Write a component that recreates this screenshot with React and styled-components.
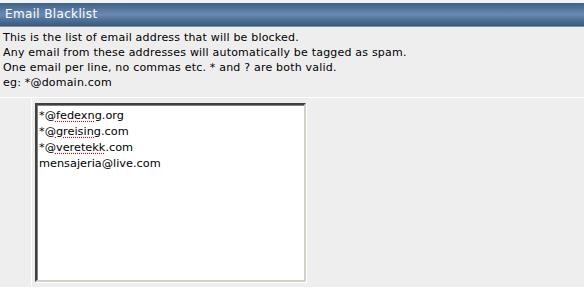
import React from 'react'
import styled, { createGlobalStyle } from 'styled-components'

const GlobalStyle = createGlobalStyle`
	body {
		margin: 0;
		background: #ffffff;
		font-family: "DejaVu Sans", Verdana, sans-serif;
		font-size: 11px;
		color: #000000;
	}
`

const Panel = styled.div`
	width: 584px;
	padding-top: 3px;
	background: #f2f4f6;
`
const Header = styled.div`
	height: 23px;
	line-height: 23px;
	padding-left: 5px;
	color: #ffffff;
	font-size: 12px;
	letter-spacing: 0.35px;
	background: linear-gradient(to bottom, #3e6189 0%, #5d7ea4 35%, #6a8ab0 50%, #4c6f96 75%, #365a80 100%);
	border-bottom: 1px solid #8a8f96;
`
const Description = styled.div`
	background: #eeeeee;
	padding: 3px 3px 2px;
	line-height: 15px;
	height: 65px;
	letter-spacing: 0.2px;
`
const Row = styled.div`
	display: flex;
	gap: 1px;
	background: #ffffff;
	padding-top: 1px;
	padding-bottom: 8px;
`
const LabelCell = styled.div`
	width: 31px;
	background: #eeeeee;
`
const FieldCell = styled.div`
	flex: 1;
	background: #eeeeee;
	padding: 5px 0 5px 3px;
`
const ListBox = styled.div`
	box-sizing: border-box;
	width: 271px;
	height: 179px;
	background: #ffffff;
	border-style: solid;
	border-width: 2px;
	border-color: #404040 #d4d0c8 #d4d0c8 #404040;
	box-shadow: inset 1px 1px 0 #808080, 1px 1px 0 #ffffff;
	padding: 3px 2px;
	font-size: 11.3px;
	line-height: 16px;
	overflow: hidden;
`
const Entry = styled.div`
	white-space: nowrap;
`
const Misspelled = styled.span`
	text-decoration: underline dotted #e00000;
	text-underline-offset: 2px;
`

const entries = [
	['*@', 'fedexng', '.org'],
	['*@', 'greising', '.com'],
	['*@', 'veretekk', '.com'],
	['mensajeria@live.com', '', ''],
]

export default function App() {
	return (
		<>
			<GlobalStyle />
			<Panel>
				<Header>Email Blacklist</Header>
				<Description>
					This is the list of email address that will be blocked.<br />
					Any email from these addresses will automatically be tagged as spam.<br />
					One email per line, no commas etc. * and ? are both valid.<br />
					eg: *@domain.com
				</Description>
				<Row>
					<LabelCell />
					<FieldCell>
						<ListBox>
							{entries.map(([pre, word, post]) => (
								<Entry key={pre + word}>
									{pre}
									{word && <Misspelled>{word}</Misspelled>}
									{post}
								</Entry>
							))}
						</ListBox>
					</FieldCell>
				</Row>
			</Panel>
		</>
	)
}
